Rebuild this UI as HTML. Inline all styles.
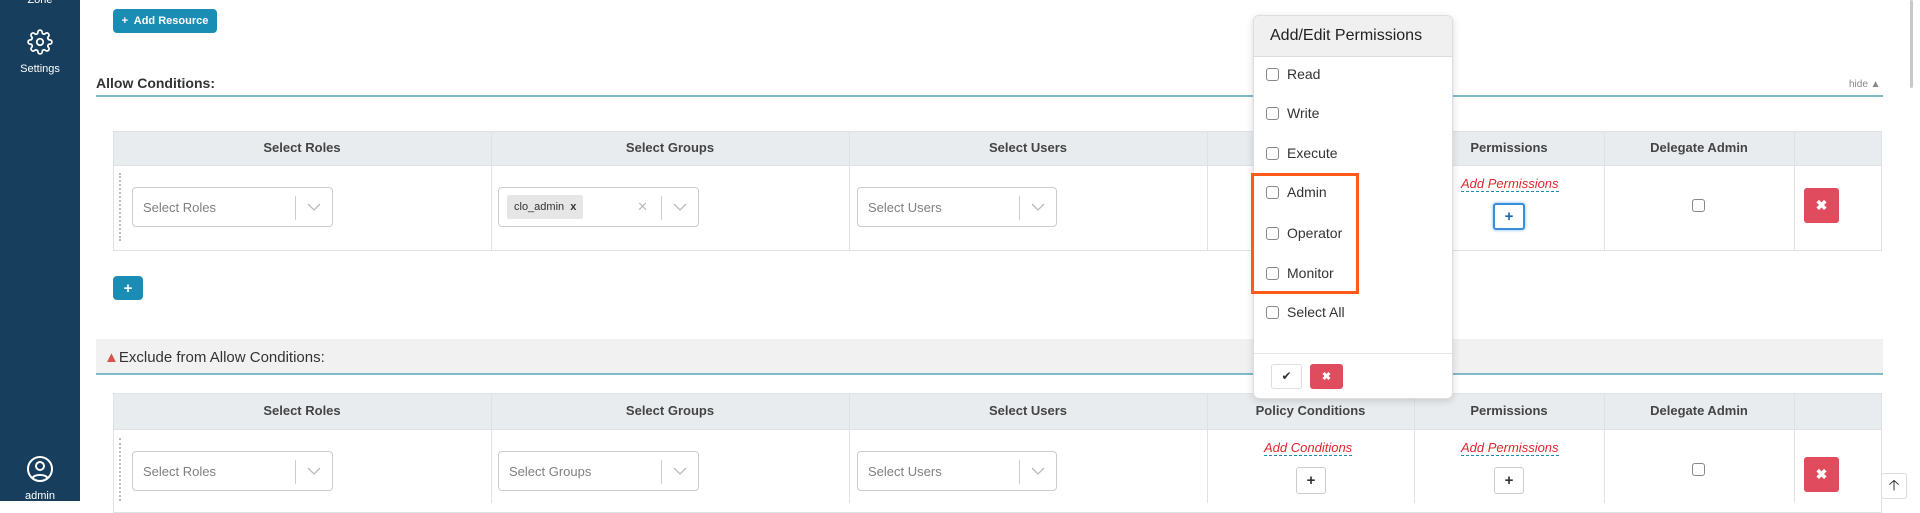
<!DOCTYPE html>
<html><head><meta charset="utf-8"><style>
*{box-sizing:border-box;margin:0;padding:0}
body{width:1920px;height:501px;overflow:hidden;background:#fff;font-family:"Liberation Sans",sans-serif;color:#333;position:relative}
.a{position:absolute}
.side{left:0;top:0;width:80px;height:501px;background:#173e5c;color:#fff;font-size:11px;text-align:center}
.btnb{background:#1a8db4;color:#fff;border-radius:4px;font-size:11px;display:flex;align-items:center;justify-content:center;font-weight:bold}
.hdr{background:#e9ecef;border-top:1px solid #dee2e6;border-bottom:1px solid #dee2e6}
.th{font-size:13px;font-weight:bold;color:#444;text-align:center;line-height:34px}
.vl{width:1px;background:#dee2e6}
.sel{border:1px solid #ccc;border-radius:4px;height:40px;background:#fff;font-size:13px;color:#808080;display:flex;align-items:center;padding-left:10px}
.sel .sep{position:absolute;right:36px;top:8px;width:1px;height:24px;background:#ccc}
.sel svg{position:absolute;right:11px;top:15px}
.red{background:#e04b5d;color:#fff;border-radius:3px;font-size:14px;font-weight:bold;display:flex;align-items:center;justify-content:center}
.plus{border:1px solid #ccc;border-radius:3px;background:#fff;color:#333;font-weight:bold;font-size:15px;display:flex;align-items:center;justify-content:center}
.addp{color:#e0262f;font-style:italic;font-size:13px;border-bottom:1px dashed #1a8db4;white-space:nowrap}
.cb{width:13px;height:13px;border:1px solid #888;border-radius:3px;background:#fff}
.item{left:1266px;font-size:14px;color:#333;display:flex;align-items:center;gap:8px}
</style></head><body>
<div class="a side">
 <div class="a" style="top:-6px;left:0;width:80px">Zone</div>
 <svg class="a" style="left:27px;top:29px" width="26" height="26" viewBox="0 0 24 24" fill="none" stroke="#fff" stroke-width="1.6"><circle cx="12" cy="12" r="3"/><path d="M19.4 15a1.65 1.65 0 0 0 .33 1.82l.06.06a2 2 0 1 1-2.83 2.83l-.06-.06a1.65 1.65 0 0 0-1.820-.33 1.65 1.65 0 0 0-1 1.51V21a2 2 0 1 1-4 0v-.09A1.65 1.650 0 0 0 9 19.4a1.65 1.65 0 0 0-1.82.33l-.06.06a2 2 0 1 1-2.83-2.83l.06-.06A1.65 1.65 0 0 0 4.68 15a1.65 1.65 0 0 0-1.51-1H3a2 2 0 1 1 0-4h.09A1.65 1.65 0 0 0 4.6 9a1.65 1.65 0 0 0-.33-1.82l-.06-.06a2 2 0 1 1 2.830-2.83l.06.06A1.65 1.65 0 0 0 9 4.68 1.65 1.65 0 0 0 10 3.17V3a2 2 0 1 1 4 0v.09a1.65 1.65 0 0 0 1 1.51 1.65 1.65 0 0 0 1.82-.33l.06-.06a2 2 0 1 1 2.83 2.83l-.06.06A1.65 1.65 0 0 0 19.4 9a1.65 1.65 0 0 0 1.51 1H21a2 2 0 1 1 0 4h-.09a1.65 1.65 0 0 0-1.51 1z"/></svg>
 <div class="a" style="top:63px;left:0;width:80px">Settings</div>
 <svg class="a" style="left:26px;top:455px" width="28" height="28" viewBox="0 0 28 28" fill="none" stroke="#fff" stroke-width="2"><circle cx="14" cy="14" r="12"/><circle cx="14" cy="11" r="4"/><path d="M6.5 23c2-4 13-4 15 0"/></svg>
 <div class="a" style="top:490px;left:0;width:80px">admin</div>
</div>

<div class="a btnb" style="left:113px;top:9px;width:104px;height:24px">+&nbsp; Add Resource</div>

<div class="a" style="left:96px;top:75px;font-size:14px;font-weight:bold;color:#333">Allow Conditions:</div>
<div class="a" style="left:1849px;top:79px;font-size:10px;color:#888">hide &#9650;</div>
<div class="a" style="left:96px;top:95px;width:1787px;height:2px;background:#80bac9"></div>

<!-- table 1 -->
<div class="a hdr" style="left:113px;top:131px;width:1769px;height:35px"></div>
<div class="a" style="left:113px;top:131px;width:1769px;height:120px;border:1px solid #dee2e6"></div>
<div class="a th" style="left:113px;top:131px;width:378px">Select Roles</div>
<div class="a th" style="left:491px;top:131px;width:358px">Select Groups</div>
<div class="a th" style="left:849px;top:131px;width:358px">Select Users</div>
<div class="a th" style="left:1207px;top:131px;width:207px">Policy Conditions</div>
<div class="a th" style="left:1414px;top:131px;width:190px">Permissions</div>
<div class="a th" style="left:1604px;top:131px;width:190px">Delegate Admin</div>
<div class="a vl" style="left:491px;top:131px;height:120px"></div>
<div class="a vl" style="left:849px;top:131px;height:120px"></div>
<div class="a vl" style="left:1207px;top:131px;height:120px"></div>
<div class="a vl" style="left:1414px;top:131px;height:120px"></div>
<div class="a vl" style="left:1604px;top:131px;height:120px"></div>
<div class="a vl" style="left:1794px;top:131px;height:120px"></div>
<div class="a" style="left:119px;top:173px;width:3px;height:68px;border-left:2px dotted #bbb"></div>
<div class="a sel" style="left:132px;top:187px;width:201px">Select Roles<span class="sep"></span><svg width="14" height="9" viewBox="0 0 14 9"><path d="M1 1l6 6 6-6" fill="none" stroke="#bbb" stroke-width="1.3"/></svg></div>
<div class="a sel" style="left:498px;top:187px;width:201px;padding-left:8px"><span style="background:#e6e6e6;color:#333;font-size:11px;padding:6px 7px;border-radius:2px">clo_admin &nbsp;<b>x</b></span><span class="a" style="right:50px;top:11px;color:#bbb">&#10005;</span><span class="sep"></span><svg width="14" height="9" viewBox="0 0 14 9"><path d="M1 1l6 6 6-6" fill="none" stroke="#bbb" stroke-width="1.3"/></svg></div>
<div class="a sel" style="left:857px;top:187px;width:200px">Select Users<span class="sep"></span><svg width="14" height="9" viewBox="0 0 14 9"><path d="M1 1l6 6 6-6" fill="none" stroke="#bbb" stroke-width="1.3"/></svg></div>
<div class="a addp" style="left:1461px;top:176px">Add Permissions</div>
<div class="a plus" style="left:1493px;top:203px;width:32px;height:27px;border:2px solid #3a8fd8;box-shadow:0 0 3px #7ab3f0;color:#1a6ab0">+</div>
<div class="a cb" style="left:1692px;top:199px"></div>
<div class="a red" style="left:1804px;top:188px;width:35px;height:35px">&#10006;</div>

<div class="a btnb" style="left:113px;top:276px;width:30px;height:24px;font-size:15px">+</div>

<!-- exclude -->
<div class="a" style="left:96px;top:339px;width:1787px;height:36px;background:#f1f1f1;border-bottom:2px solid #80bac9"></div>
<div class="a" style="left:104px;top:349px;font-size:15px;color:#333"><span style="color:#d9534f">&#9650;</span>Exclude from Allow Conditions:</div>

<div class="a hdr" style="left:113px;top:393px;width:1769px;height:37px"></div>
<div class="a" style="left:113px;top:393px;width:1769px;height:120px;border:1px solid #dee2e6"></div>
<div class="a th" style="left:113px;top:394px;width:378px">Select Roles</div>
<div class="a th" style="left:491px;top:394px;width:358px">Select Groups</div>
<div class="a th" style="left:849px;top:394px;width:358px">Select Users</div>
<div class="a th" style="left:1207px;top:394px;width:207px">Policy Conditions</div>
<div class="a th" style="left:1414px;top:394px;width:190px">Permissions</div>
<div class="a th" style="left:1604px;top:394px;width:190px">Delegate Admin</div>
<div class="a vl" style="left:491px;top:393px;height:110px"></div>
<div class="a vl" style="left:849px;top:393px;height:110px"></div>
<div class="a vl" style="left:1207px;top:393px;height:110px"></div>
<div class="a vl" style="left:1414px;top:393px;height:110px"></div>
<div class="a vl" style="left:1604px;top:393px;height:110px"></div>
<div class="a vl" style="left:1794px;top:393px;height:110px"></div>
<div class="a" style="left:119px;top:438px;width:3px;height:63px;border-left:2px dotted #bbb"></div>
<div class="a sel" style="left:132px;top:451px;width:201px">Select Roles<span class="sep"></span><svg width="14" height="9" viewBox="0 0 14 9"><path d="M1 1l6 6 6-6" fill="none" stroke="#bbb" stroke-width="1.3"/></svg></div>
<div class="a sel" style="left:498px;top:451px;width:201px">Select Groups<span class="sep"></span><svg width="14" height="9" viewBox="0 0 14 9"><path d="M1 1l6 6 6-6" fill="none" stroke="#bbb" stroke-width="1.3"/></svg></div>
<div class="a sel" style="left:857px;top:451px;width:200px">Select Users<span class="sep"></span><svg width="14" height="9" viewBox="0 0 14 9"><path d="M1 1l6 6 6-6" fill="none" stroke="#bbb" stroke-width="1.3"/></svg></div>
<div class="a addp" style="left:1264px;top:440px">Add Conditions</div>
<div class="a plus" style="left:1296px;top:467px;width:30px;height:27px">+</div>
<div class="a addp" style="left:1461px;top:440px">Add Permissions</div>
<div class="a plus" style="left:1494px;top:467px;width:30px;height:27px">+</div>
<div class="a cb" style="left:1692px;top:463px"></div>
<div class="a red" style="left:1804px;top:457px;width:35px;height:35px">&#10006;</div>

<div class="a" style="left:1881px;top:473px;width:26px;height:26px;background:#fff;border:1px solid #ddd;border-radius:3px;font-size:15px;text-align:center;line-height:24px;color:#222">&#129121;</div>
<div class="a" style="left:1910px;top:0;width:3px;height:88px;background:#c8c8c8;border-radius:2px"></div>

<!-- popover -->
<div class="a" style="left:1253px;top:15px;width:200px;height:384px;background:#fff;border:1px solid #ddd;border-radius:6px;box-shadow:0 2px 8px rgba(0,0,0,.15);overflow:hidden">
 <div style="height:41px;background:#f0f0f0;border-bottom:1px solid #ddd;font-size:16px;color:#222;padding:11px 0 0 16px">Add/Edit Permissions</div>
 <div class="a" style="left:0;top:337px;width:200px;height:1px;background:#e5e5e5"></div>
 <div class="a" style="left:17px;top:348px;width:31px;height:25px;border:1px solid #ddd;border-radius:3px;font-size:12px;text-align:center;line-height:23px">&#10004;</div>
 <div class="a red" style="left:56px;top:348px;width:33px;height:25px;font-size:11px">&#10006;</div>
</div>
<div class="a item" style="top:66px"><span class="cb"></span>Read</div>
<div class="a item" style="top:105px"><span class="cb"></span>Write</div>
<div class="a item" style="top:145px"><span class="cb"></span>Execute</div>
<div class="a item" style="top:184px"><span class="cb"></span>Admin</div>
<div class="a item" style="top:225px"><span class="cb"></span>Operator</div>
<div class="a item" style="top:265px"><span class="cb"></span>Monitor</div>
<div class="a item" style="top:304px"><span class="cb"></span>Select All</div>
<div class="a" style="left:1251px;top:173px;width:108px;height:121px;border:3px solid #ff5a1a"></div>
</body></html>
